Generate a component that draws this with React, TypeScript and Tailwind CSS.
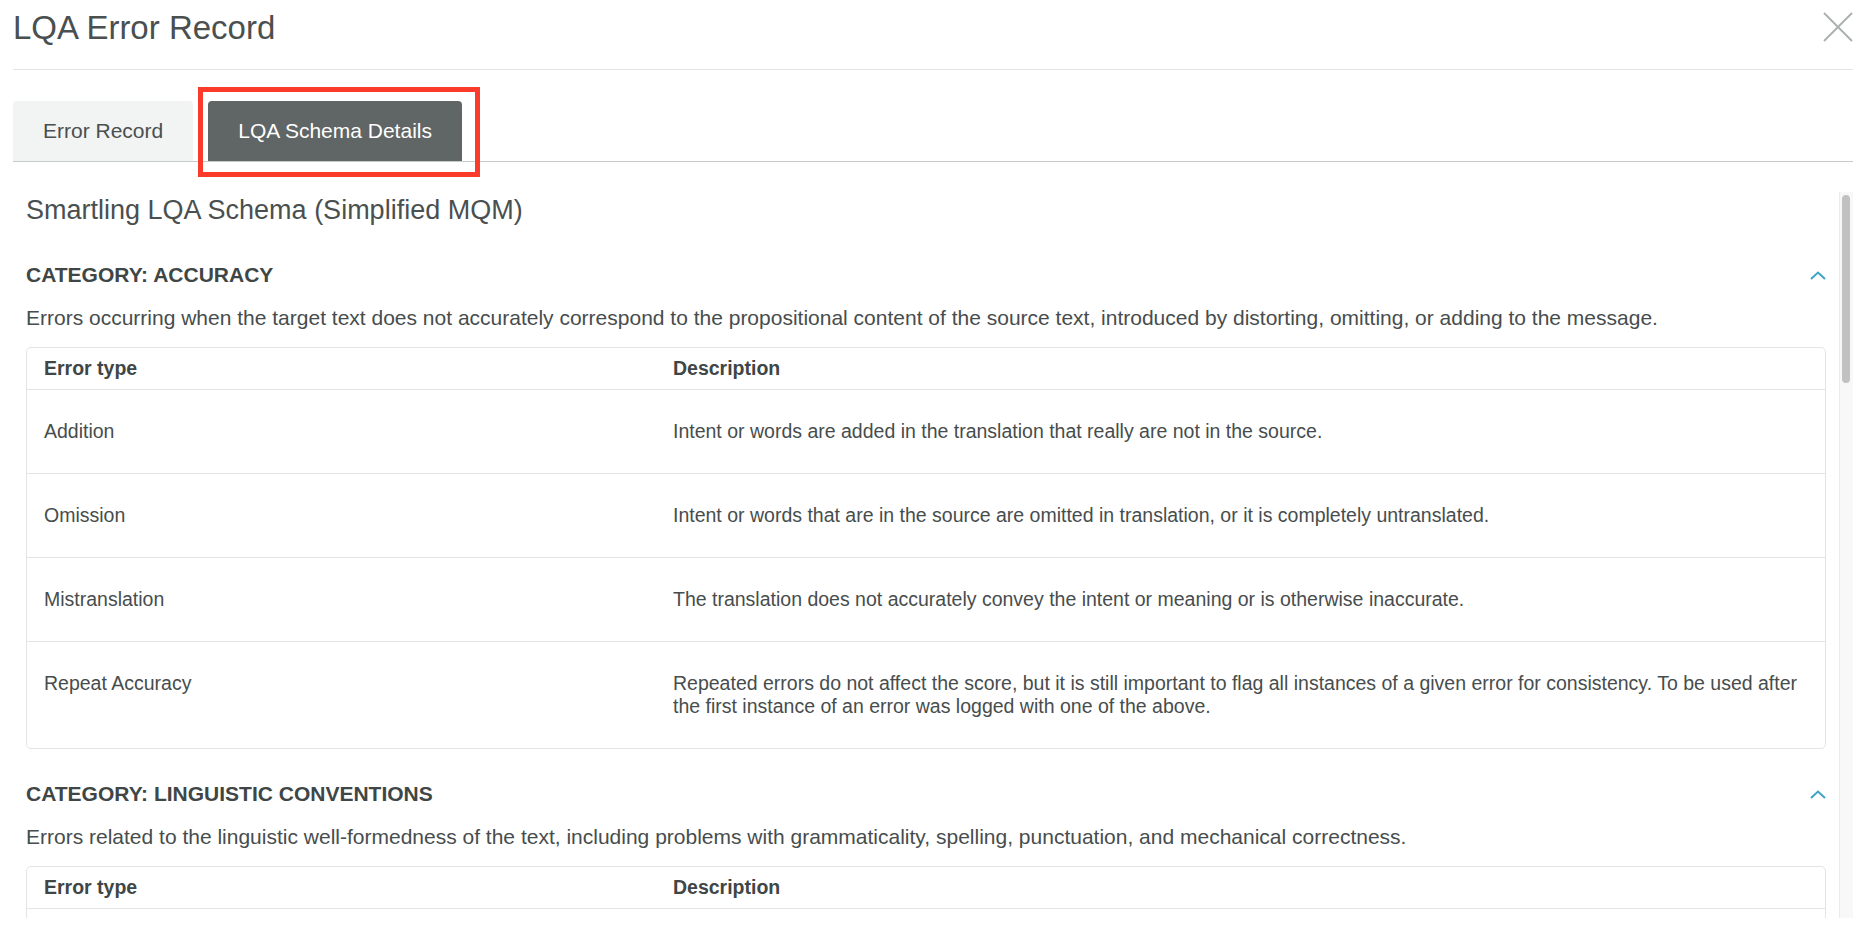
import { ReactNode } from "react"

type Row = { type: string, desc: ReactNode }

const accuracyRows: Row[] = [
    { type: 'Addition', desc: 'Intent or words are added in the translation that really are not in the source.' },
    { type: 'Omission', desc: 'Intent or words that are in the source are omitted in translation, or it is completely untranslated.' },
    { type: 'Mistranslation', desc: 'The translation does not accurately convey the intent or meaning or is otherwise inaccurate.' },
    {
        type: 'Repeat Accuracy',
        desc: <span className="whitespace-nowrap">Repeated errors do not affect the score, but it is still important to flag all instances of a given error for consistency. To be used after<br />the first instance of an error was logged with one of the above.</span>
    },
]

const linguisticRows: Row[] = [
    { type: 'Grammar', desc: 'Errors in grammar, syntax or morphology of the target language.' },
    { type: 'Spelling', desc: 'Errors in spelling, including capitalization and diacritics.' },
    { type: 'Punctuation', desc: 'Punctuation is missing, used incorrectly or does not follow target language conventions.' },
]

export default function App() {
    return (
        <div className="w-[1863px] h-[933px] overflow-hidden bg-white pl-[13px] pr-[10px] font-['Liberation_Sans',Arial,sans-serif] text-[#474d4d]">
            <div className="flex justify-between h-[70px] border-b border-[#e3e4e4]">
                <h1 className="pt-[9px] text-[33px] leading-[38px] text-[#4a4f4f]">LQA Error Record</h1>
                <button className="mt-[12px] w-[30px] h-[30px]">
                    <svg width="30" height="30" viewBox="0 0 30 30" fill="none" stroke="#aab1af" strokeWidth="2">
                        <line x1="1" y1="1" x2="29" y2="29" />
                        <line x1="29" y1="1" x2="1" y2="29" />
                    </svg>
                </button>
            </div>

            <div className="mt-[31px] flex gap-[15px] border-b border-[#c6caca]">
                <button className="h-[60px] px-[30px] rounded-t-[4px] bg-[#f2f3f3] text-[21px] text-[#4a4f4f]">Error Record</button>
                <div className="relative">
                    <button className="h-[60px] px-[30px] rounded-t-[4px] bg-[#606565] text-[21px] text-white">LQA Schema Details</button>
                    <div className="absolute -left-[10px] -top-[14px] w-[282px] h-[90px] border-[5px] border-[#fa3a2b]" />
                </div>
            </div>

            <div className="mt-[30px] flex h-[726px]">
                <div className="flex-1 overflow-hidden px-[13px] pt-[3px]">
                    <h2 className="text-[27px] leading-[31px] text-[#4a4f4f]">Smartling LQA Schema (Simplified MQM)</h2>
                    <Section
                        className="mt-[37px]"
                        title="CATEGORY: ACCURACY"
                        text="Errors occurring when the target text does not accurately correspond to the propositional content of the source text, introduced by distorting, omitting, or adding to the message."
                        rows={accuracyRows}
                    />
                    <Section
                        className="mt-[33px]"
                        title="CATEGORY: LINGUISTIC CONVENTIONS"
                        text="Errors related to the linguistic well-formedness of the text, including problems with grammaticality, spelling, punctuation, and mechanical correctness."
                        rows={linguisticRows}
                    />
                </div>
                <div className="relative w-[14px] bg-[#f8f8f8] border-l border-[#ececec]">
                    <div className="absolute left-[2px] top-[3px] w-[8px] h-[188px] rounded-full bg-[#c1c1c1]" />
                </div>
            </div>
        </div>
    )
}

function Section(props: { className: string, title: string, text: string, rows: Row[] }) {

    const { className, title, text, rows } = props

    return (
        <section className={className}>
            <div className="flex items-center justify-between h-[24px]">
                <h3 className="text-[21px] leading-[24px] font-bold text-[#404646]">{title}</h3>
                <svg width="16" height="9" viewBox="0 0 16 9" fill="none" stroke="#3ba6c2" strokeWidth="2">
                    <polyline points="1,8 8,1.5 15,8" />
                </svg>
            </div>
            <p className="mt-[19px] text-[21px] leading-[24px]">{text}</p>
            <div className="mt-[17px] border border-[#e3e5e5] rounded-[5px] text-[19.5px] leading-[23px]">
                <div className="flex border-b border-[#e3e5e5] font-bold text-[#404646]">
                    <div className="w-[629px] px-[17px] py-[9px]">Error type</div>
                    <div className="flex-1 px-[17px] py-[9px]">Description</div>
                </div>
                {rows.map((row, i) => (
                    <div key={row.type} className={i < rows.length - 1 ? "flex border-b border-[#e3e5e5]" : "flex"}>
                        <div className="w-[629px] px-[17px] py-[30px]">{row.type}</div>
                        <div className="flex-1 px-[17px] py-[30px]">{row.desc}</div>
                    </div>
                ))}
            </div>
        </section>
    )
}
